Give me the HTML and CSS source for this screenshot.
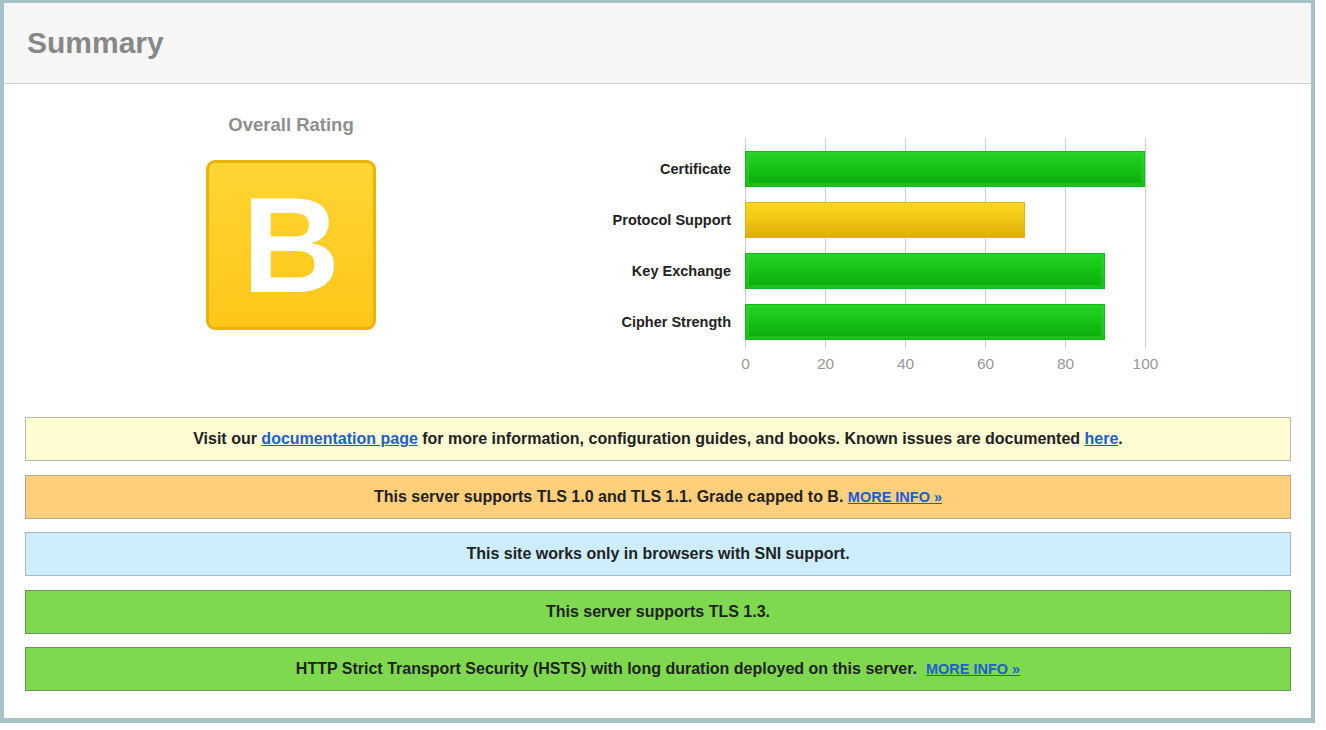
FILE: index.html
```html
<!DOCTYPE html>
<html>
<head>
<meta charset="utf-8">
<link rel="stylesheet" href="styles.css">
</head>
<body>
<div class="panel">
  <div class="panel-head"><h1 class="title">Summary</h1></div>
  <div class="panel-body">
    <div class="overview">
      <div class="rating">
        <div class="rating-label">Overall Rating</div>
        <div class="grade">B</div>
      </div>
      <div class="chart">
        <div class="chart-rows">
          <div class="chart-labels">
            <div class="chart-label">Certificate</div>
            <div class="chart-label">Protocol Support</div>
            <div class="chart-label">Key Exchange</div>
            <div class="chart-label">Cipher Strength</div>
          </div>
          <div class="plot">
            <div class="bar bar-green" style="width:400px"></div>
            <div class="bar bar-yellow" style="width:280px"></div>
            <div class="bar bar-green" style="width:360px"></div>
            <div class="bar bar-green" style="width:360px"></div>
          </div>
        </div>
        <div class="axis">
          <span class="tick">0</span>
          <span class="tick">20</span>
          <span class="tick">40</span>
          <span class="tick">60</span>
          <span class="tick">80</span>
          <span class="tick">100</span>
        </div>
      </div>
    </div>
    <div class="notices">
      <div class="notice notice-info">Visit our <a href="#" class="link">documentation page</a> for more information, configuration guides, and books. Known issues are documented <a href="#" class="link">here</a>.</div>
      <div class="notice notice-warn">This server supports TLS 1.0 and TLS 1.1. Grade capped to B. <a href="#" class="more">MORE INFO »</a></div>
      <div class="notice notice-blue">This site works only in browsers with SNI support.</div>
      <div class="notice notice-good">This server supports TLS 1.3.</div>
      <div class="notice notice-good">HTTP Strict Transport Security (HSTS) with long duration deployed on this server.&nbsp; <a href="#" class="more">MORE INFO »</a></div>
    </div>
  </div>
</div>
</body>
</html>
```
FILE: styles.css
```css
html, body {
  margin: 0;
  padding: 0;
  background: #ffffff;
}
body {
  font-family: "Liberation Sans", Arial, Helvetica, sans-serif;
  color: #222;
}
.panel {
  width: 1307px;
  border-style: solid;
  border-color: #a7c2c8;
  border-width: 3px 4px 5px 4px;
  background: #fff;
}
.panel-head {
  height: 80px;
  background: #f6f6f6;
  border-bottom: 1px solid #cfcfcf;
  display: flex;
  align-items: center;
  padding-left: 23px;
}
.title {
  margin: 0;
  font-size: 30px;
  font-weight: bold;
  color: #888;
  line-height: 34px;
}
.panel-body {
  padding: 0 20px 27px 21px;
}
.overview {
  display: flex;
  height: 333px;
}
.rating {
  width: 532px;
  display: flex;
  flex-direction: column;
  align-items: center;
  padding-top: 30px;
}
.rating-label {
  font-size: 18.5px;
  font-weight: bold;
  color: #8e8e8e;
  line-height: 22px;
}
.grade {
  margin-top: 24px;
  width: 164px;
  height: 164px;
  border: 3px solid #eab30a;
  border-radius: 9px;
  background: linear-gradient(#ffd534, #ffc618);
  color: #fff;
  font-size: 136px;
  font-weight: bold;
  line-height: 164px;
  text-align: center;
}
.chart {
  margin-top: 54px;
  margin-left: 36px;
}
.chart-rows {
  display: flex;
}
.chart-labels {
  width: 138px;
  padding-right: 14px;
  padding-top: 13px;
  display: flex;
  flex-direction: column;
  gap: 15px;
}
.chart-label {
  height: 36px;
  line-height: 36px;
  text-align: right;
  font-size: 14.5px;
  font-weight: bold;
  color: #222;
  white-space: nowrap;
}
.plot {
  width: 401px;
  padding: 13px 0 8px 0;
  display: flex;
  flex-direction: column;
  gap: 15px;
  background-image: repeating-linear-gradient(to right, #cccccc 0, #cccccc 1px, transparent 1px, transparent 80px);
}
.bar {
  height: 36px;
  box-sizing: border-box;
}
.bar-green {
  background: linear-gradient(#22d022 0%, #1bca1b 30%, #12bd12 60%, #0caa0c 100%);
  border: 1px solid #16b816;
  box-shadow: inset 0 0 0 3px rgba(50, 215, 50, 0.45);
}
.bar-yellow {
  background: linear-gradient(#fbd821 0%, #f3ca16 40%, #e9ba0e 70%, #e0ad0c 100%);
  border: 1px solid #e2b412;
}
.axis {
  position: relative;
  height: 30px;
  margin-left: 152px;
}
.tick {
  position: absolute;
  top: 7px;
  transform: translateX(-50%);
  font-size: 15.5px;
  color: #999;
  line-height: 18px;
}
.tick:nth-child(1) { left: 0.5px; }
.tick:nth-child(2) { left: 80.5px; }
.tick:nth-child(3) { left: 160.5px; }
.tick:nth-child(4) { left: 240.5px; }
.tick:nth-child(5) { left: 320.5px; }
.tick:nth-child(6) { left: 400.5px; }
.notices {
  display: flex;
  flex-direction: column;
  gap: 13.5px;
}
.notice {
  height: 44px;
  box-sizing: border-box;
  display: flex;
  align-items: center;
  justify-content: center;
  font-size: 16px;
  font-weight: bold;
  color: #222;
  white-space: pre;
}
.notice-info {
  background: #fffbd3;
  border: 1px solid #b9b9b0;
}
.notice-warn {
  background: #ffcf7c;
  border: 1px solid #b7a98e;
}
.notice-blue {
  background: #cdedfd;
  border: 1px solid #a9bcc6;
}
.notice-good {
  background: #7fd94e;
  border: 1px solid #6f8f6a;
}
.link {
  color: #1b5fd0;
  text-decoration: underline;
}
.more {
  color: #1b5fd0;
  font-size: 14.5px;
  text-decoration: underline;
}
```
